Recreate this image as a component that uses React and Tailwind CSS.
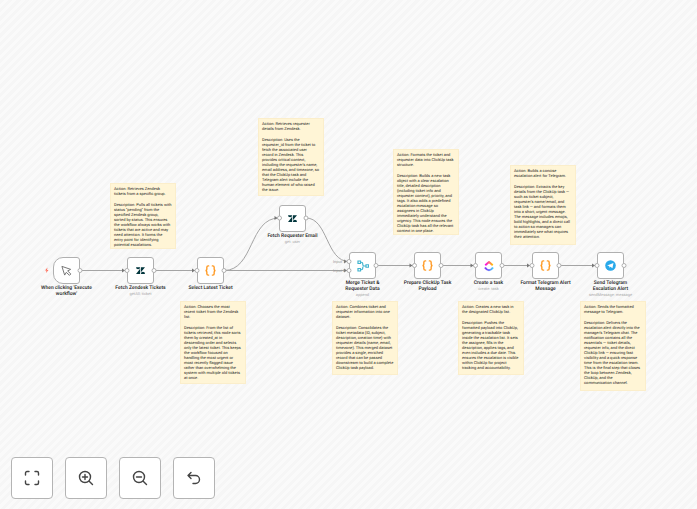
import clsx from 'clsx';

const notes = [
    { x: 'left-[110px]', y: 'top-[183px]', h: 'h-[66px]', action: 'Action: Retrieves Zendesk\ntickets from a specific group.', text: 'Description: Pulls all tickets with\nstatus "pending" from the\nspecified Zendesk group,\nsorted by status. This ensures\nthe workflow always works with\ntickets that are active and may\nneed attention. It forms the\nentry point for identifying\npotential escalations.' },
    { x: 'left-[180px]', y: 'top-[301px]', h: 'h-[83px]', action: 'Action: Chooses the most\nrecent ticket from the Zendesk\nlist.', text: 'Description: From the list of\ntickets retrieved, this node sorts\nthem by created_at in\ndescending order and selects\nonly the latest ticket. This keeps\nthe workflow focused on\nhandling the most urgent or\nmost recently flagged issue\nrather than overwhelming the\nsystem with multiple old tickets\nat once.' },
    { x: 'left-[258px]', y: 'top-[118px]', h: 'h-[78px]', action: 'Action: Retrieves requester\ndetails from Zendesk.', text: "Description: Uses the\nrequester_id from the ticket to\nfetch the associated user\nrecord in Zendesk. This\nprovides critical context,\nincluding the requester's name,\nemail address, and timezone, so\nthat the ClickUp task and\nTelegram alert include the\nhuman element of who raised\nthe issue." },
    { x: 'left-[332px]', y: 'top-[301px]', h: 'h-[74px]', action: 'Action: Combines ticket and\nrequester information into one\ndataset.', text: 'Description: Consolidates the\nticket metadata (ID, subject,\ndescription, creation time) with\nrequester details (name, email,\ntimezone). This merged dataset\nprovides a single, enriched\nrecord that can be passed\ndownstream to build a complete\nClickUp task payload.' },
    { x: 'left-[393px]', y: 'top-[149px]', h: 'h-[86px]', action: 'Action: Formats the ticket and\nrequester data into ClickUp task\nstructure.', text: 'Description: Builds a new task\nobject with a clear escalation\ntitle, detailed description\n(including ticket info and\nrequester context), priority, and\ntags. It also adds a predefined\nescalation message so\nassignees in ClickUp\nimmediately understand the\nurgency. This node ensures the\nClickUp task has all the relevant\ncontext in one place.' },
    { x: 'left-[458px]', y: 'top-[301px]', h: 'h-[74px]', action: 'Action: Creates a new task in\nthe designated ClickUp list.', text: 'Description: Pushes the\nformatted payload into ClickUp,\ngenerating a trackable task\ninside the escalation list. It sets\nthe assignee, fills in the\ndescription, applies tags, and\neven includes a due date. This\nensures the escalation is visible\nwithin ClickUp for project\ntracking and accountability.' },
    { x: 'left-[510px]', y: 'top-[165px]', h: 'h-[80px]', action: 'Action: Builds a concise\nescalation alert for Telegram.', text: "Description: Extracts the key\ndetails from the ClickUp task —\nsuch as ticket subject,\nrequester's name/email, and\ntask link — and formats them\ninto a short, urgent message.\nThe message includes emojis,\nbold highlights, and a direct call\nto action so managers can\nimmediately see what requires\ntheir attention." },
    { x: 'left-[580px]', y: 'top-[301px]', h: 'h-[90px]', action: 'Action: Sends the formatted\nmessage to Telegram.', text: "Description: Delivers the\nescalation alert directly into the\nmanager's Telegram chat. The\nnotification contains all the\nessentials — ticket details,\nrequester info, and the direct\nClickUp link — ensuring fast\nvisibility and a quick response\ntime from the escalation team.\nThis is the final step that closes\nthe loop between Zendesk,\nClickUp, and the\ncommunication channel." },
];

const nodes = [
    { x: 'left-[53px]', y: 'top-[257px]', icon: 'cursor', label: "When clicking 'Execute\nworkflow'" },
    { x: 'left-[127px]', y: 'top-[257px]', icon: 'zendesk', label: 'Fetch Zendesk Tickets', sub: 'getAll: ticket' },
    { x: 'left-[197px]', y: 'top-[257px]', icon: 'code', label: 'Select Latest Ticket' },
    { x: 'left-[279px]', y: 'top-[205px]', icon: 'zendesk', label: 'Fetch Requester Email', sub: 'get: user' },
    { x: 'left-[349px]', y: 'top-[252px]', icon: 'merge', label: 'Merge Ticket &\nRequester Data', sub: 'append' },
    { x: 'left-[414px]', y: 'top-[252px]', icon: 'code', label: 'Prepare ClickUp Task\nPayload' },
    { x: 'left-[475px]', y: 'top-[252px]', icon: 'clickup', label: 'Create a task', sub: 'create: task' },
    { x: 'left-[532px]', y: 'top-[252px]', icon: 'code', label: 'Format Telegram Alert\nMessage' },
    { x: 'left-[597px]', y: 'top-[252px]', icon: 'telegram', label: 'Send Telegram\nEscalation Alert', sub: 'sendMessage: message' },
];

function NodeIcon({ name }) {
    if (name === 'cursor') {
        return (
            <svg className="size-[11px]" viewBox="0 0 24 24" fill="none" stroke="#6b6b6b" strokeWidth="2" strokeLinejoin="round">
                <path d="M2 3l19 6.500-6.500 3.500 7 6.500-3 3-7-6.500L8 22z" />
            </svg>
        );
    }
    if (name === 'zendesk') {
        return (
            <svg className="size-[9px]" viewBox="0 0 24 20" fill="#03363d">
                <path d="M11 5.500V19H0zM11 1a5.500 5.500 0 0 1-11 0zM13 19a5.500 5.500 0 0 1 11 0zM13 14.500V1h11z" />
            </svg>
        );
    }
    if (name === 'code') {
        return (
            <svg className="size-[11px]" viewBox="0 0 24 24" fill="none" stroke="#ff9922" strokeWidth="3" strokeLinecap="round">
                <path d="M8 2H7a3 3 0 0 0-3 3v4a3 3 0 0 1-3 3 3 3 0 0 1 3 3v4a3 3 0 0 0 3 3h1M16 2h1a3 3 0 0 1 3 3v4a3 3 0 0 0 3 3 3 3 0 0 0-3 3v4a3 3 0 0 1-3 3h-1" />
            </svg>
        );
    }
    if (name === 'merge') {
        return (
            <svg className="size-3" viewBox="0 0 24 24" fill="none" stroke="#42b4cf" strokeWidth="2.400">
                <path d="M2 2h5v5H2zM2 17h5v5H2zM18 9.500h5v5h-5zM7 4.500h1.500a3 3 0 0 1 3 3v1.500a3 3 0 0 0 3 3H18M7 19.500h1.500a3 3 0 0 0 3-3V15a3 3 0 0 1 3-3" />
            </svg>
        );
    }
    if (name === 'clickup') {
        return (
            <svg className="size-3" viewBox="0 0 24 24" fill="none" strokeWidth="4">
                <defs>
                    <linearGradient id="cuTop"><stop stopColor="#ff02f0" /><stop offset="1" stopColor="#ffc800" /></linearGradient>
                    <linearGradient id="cuBottom"><stop stopColor="#8930fd" /><stop offset="1" stopColor="#49ccf9" /></linearGradient>
                </defs>
                <path d="M4.500 10.500L12 4l7.500 6.500" stroke="url(#cuTop)" strokeLinejoin="round" />
                <path d="M4 15c4.500 7 11.500 7 16 0" stroke="url(#cuBottom)" />
            </svg>
        );
    }
    return (
        <svg className="size-[11px]" viewBox="0 0 24 24">
            <circle cx="12" cy="12" r="11.500" fill="#29a9ea" />
            <path d="M4.500 11.800L18.500 6.300l-2.300 11.500-4.300-3.200-2.200 2.200-.5-3.600z" fill="#fff" />
        </svg>
    );
}

function Note({ note }) {
    return (
        <section className={clsx('absolute flex w-[66px] flex-col gap-[6px] whitespace-pre border border-[#fbeecb] bg-[#fff5d6] px-[3px] pt-[2px] text-[4px] leading-[5px] text-[#222]', note.x, note.y, note.h)}>
            <p>{note.action}</p>
            <p>{note.text}</p>
        </section>
    );
}

function Node({ node }) {
    const trigger = node.icon === 'cursor';
    return (
        <div className={clsx('absolute flex w-[27px] flex-col items-center', node.x, node.y)}>
            <div className={clsx('flex size-[27px] items-center justify-center border border-[#b0b0b0] bg-white', trigger ? 'rounded-[3px] rounded-l-[10px]' : 'rounded-[3px]')}>
                <NodeIcon name={node.icon} />
            </div>
            <p className="mt-px whitespace-pre text-center text-[5px] leading-[6px] font-medium text-[#222]">{node.label}</p>
            {node.sub && <p className="whitespace-pre text-[4px] leading-[5px] text-[#aaa]">{node.sub}</p>}
        </div>
    );
}

// Connection lines between the nodes
function Edges() {
    return (
        <svg className="absolute top-0 left-0 h-[509px] w-[697px]" fill="none" stroke="#a4a4a4">
            <path d="M80 270.500H127M154 270.500H197M224 270.500H349M376 265.500H414M441 265.500H475M502 265.500H532M559 265.500H597" />
            <path d="M224 270.500C254 270.500 249 218 279 218M306 218C328 218 326 261.500 349 261.500" />
        </svg>
    );
}

const inputs = [[127, 270.5], [197, 270.5], [279.5, 218], [349, 261.5], [349, 270.5], [414.5, 265.5], [475.5, 265.5], [532, 265.5], [597, 265.5]];
const outputs = [[80, 270.5], [154, 270.5], [224, 270.5], [306, 218], [376, 265.5], [441, 265.5], [502, 265.5], [559, 265.5], [624, 265.5]];

function Ports() {
    return (
        <svg className="absolute top-0 left-0 h-[509px] w-[697px]">
            {inputs.map(([x, y]) => (
                <path key={`${x}-${y}`} d={`M${x - 5} ${y - 2}l3 2-3 2z`} fill="#777" />
            ))}
            {[...inputs, ...outputs].map(([x, y]) => (
                <circle key={`${x}-${y}`} cx={x} cy={y} r="2" fill="#fff" stroke="#b0b0b0" />
            ))}
            <path d="M47.500 267.500l-2.500 3h1.500l-.5 2.500 2.500-3H47z" fill="#ff6d5a" />
        </svg>
    );
}

function ControlButton({ label, children }) {
    return (
        <button aria-label={label} className="flex size-[42px] items-center justify-center rounded-[4px] border border-[#b4b4b4] bg-white">
            <svg className="size-4" viewBox="0 0 16 16" fill="none" stroke="#444" strokeWidth="1.400" strokeLinecap="round" strokeLinejoin="round">
                {children}
            </svg>
        </button>
    );
}

export default function App() {
    return (
        <main className="relative flex min-h-screen flex-col justify-end overflow-hidden bg-[#f8f8f8] bg-[repeating-linear-gradient(135deg,#f6f6f6_0px,#f6f6f6_3px,#fafafa_3px,#fafafa_6px)] font-['Roboto',sans-serif] [text-rendering:geometricPrecision]">
            <Edges />
            {notes.map((note) => (
                <Note key={note.action} note={note} />
            ))}
            {nodes.map((node) => (
                <Node key={node.label} node={node} />
            ))}
            <Ports />
            <span className="absolute top-[259px] left-[333px] text-[4px] leading-[5px] text-[#999]">Input 1</span>
            <span className="absolute top-[268px] left-[333px] text-[4px] leading-[5px] text-[#999]">Input 2</span>

            <div className="relative flex gap-3 px-[11px] pb-[10px]">
                <ControlButton label="Fit to view">
                    <path d="M1.500 5V3a1.500 1.500 0 0 1 1.500-1.500h2M11 1.500h2A1.500 1.500 0 0 1 14.500 3v2M14.500 11v2a1.500 1.500 0 0 1-1.500 1.500h-2M5 14.500H3A1.500 1.500 0 0 1 1.500 13v-2" />
                </ControlButton>
                <ControlButton label="Zoom in">
                    <path d="M14.500 14.500l-3.300-3.300M4.500 7h5M7 4.500v5" />
                    <circle cx="7" cy="7" r="5.500" />
                </ControlButton>
                <ControlButton label="Zoom out">
                    <path d="M14.500 14.500l-3.300-3.300M4.500 7h5" />
                    <circle cx="7" cy="7" r="5.500" />
                </ControlButton>
                <ControlButton label="Reset zoom">
                    <path d="M5 8.500L2 5.500l3-3M2 5.500h7.500a4 4 0 0 1 0 8H7" />
                </ControlButton>
            </div>
        </main>
    );
}
